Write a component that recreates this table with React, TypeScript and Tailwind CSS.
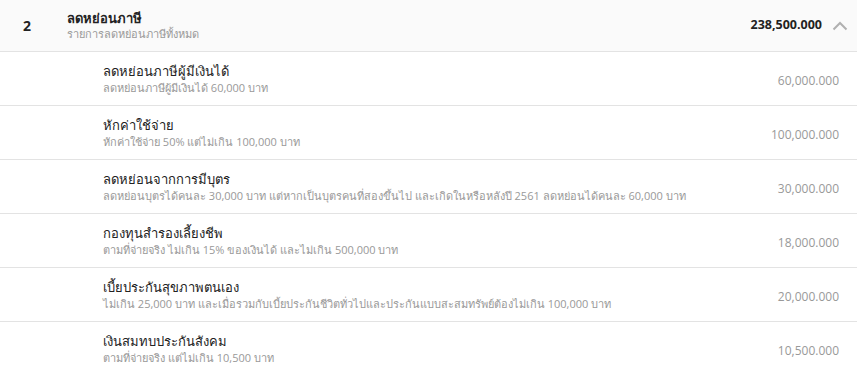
const items = [
  { title: "ลดหย่อนภาษีผู้มีเงินได้", desc: "ลดหย่อนภาษีผู้มีเงินได้ 60,000 บาท", amount: "60,000.000" },
  { title: "หักค่าใช้จ่าย", desc: "หักค่าใช้จ่าย 50% แต่ไม่เกิน 100,000 บาท", amount: "100,000.000" },
  {
    title: "ลดหย่อนจากการมีบุตร",
    desc: "ลดหย่อนบุตรได้คนละ 30,000 บาท แต่หากเป็นบุตรคนที่สองขึ้นไป และเกิดในหรือหลังปี 2561 ลดหย่อนได้คนละ 60,000 บาท",
    amount: "30,000.000",
  },
  { title: "กองทุนสำรองเลี้ยงชีพ", desc: "ตามที่จ่ายจริง ไม่เกิน 15% ของเงินได้ และไม่เกิน 500,000 บาท", amount: "18,000.000" },
  {
    title: "เบี้ยประกันสุขภาพตนเอง",
    desc: "ไม่เกิน 25,000 บาท และเมื่อรวมกับเบี้ยประกันชีวิตทั่วไปและประกันแบบสะสมทรัพย์ต้องไม่เกิน 100,000 บาท",
    amount: "20,000.000",
  },
  { title: "เงินสมทบประกันสังคม", desc: "ตามที่จ่ายจริง แต่ไม่เกิน 10,500 บาท", amount: "10,500.000" },
]

export default function App() {
  return (
    <div className="w-[857px] h-[373px] overflow-hidden bg-white font-['Open_Sans',sans-serif]">
      <div className="flex items-center h-[52px] bg-[#fafafa] border-b border-[#e3e3e3]">
        <div className="w-[67px] pl-[23px] text-[14px] font-bold text-[#222]">2</div>
        <div className="flex-1">
          <div className="text-[13px] font-bold text-[#222] leading-[16px]">ลดหย่อนภาษี</div>
          <div className="text-[11px] text-[#999] leading-[15px]">รายการลดหย่อนภาษีทั้งหมด</div>
        </div>
        <div className="text-[12.5px] font-bold text-[#222]">238,500.000</div>
        <svg width="16" height="10" viewBox="0 0 16 10" className="ml-[10px] mr-[9px] mt-[1px]">
          <polyline points="1.5,8.5 8,2 14.5,8.5" fill="none" stroke="#b0b0b0" strokeWidth="2" />
        </svg>
      </div>
      {items.map((it) => (
        <div key={it.title} className="flex items-start h-[54px] border-b border-[#e3e3e3] pl-[103px] pr-[18px] pt-[11px]">
          <div className="flex-1">
            <div className="text-[13px] text-[#222] leading-[17px]">{it.title}</div>
            <div className="text-[11px] text-[#999] leading-[16px]">{it.desc}</div>
          </div>
          <div className="text-[12px] text-[#999] leading-[17px] mt-[9px]">{it.amount}</div>
        </div>
      ))}
    </div>
  )
}
